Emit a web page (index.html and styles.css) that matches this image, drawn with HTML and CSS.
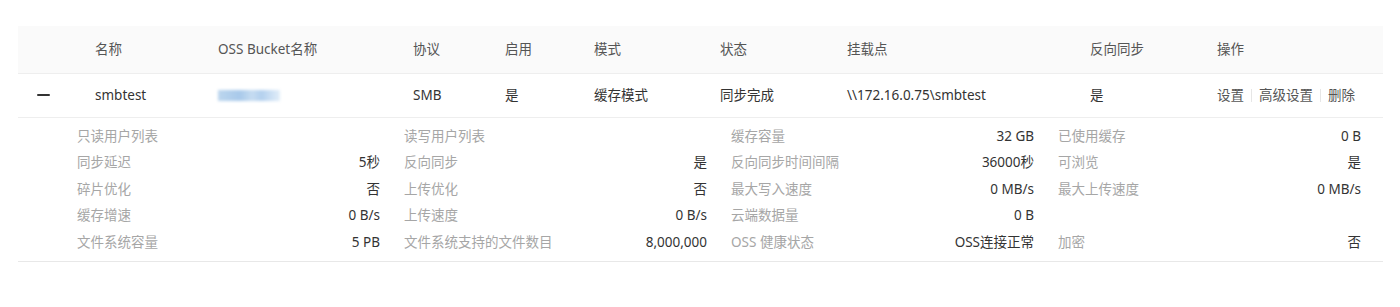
FILE: index.html
```html
<!DOCTYPE html>
<html lang="zh-CN">
<head>
<meta charset="utf-8">
<title>共享列表</title>
<link rel="stylesheet" href="styles.css">
</head>
<body>
<div class="wrap">
  <table class="tbl">
    <colgroup>
      <col class="c-exp"><col class="c-name"><col class="c-bucket"><col class="c-proto"><col class="c-en"><col class="c-mode"><col class="c-status"><col class="c-mount"><col class="c-rev"><col class="c-ops">
    </colgroup>
    <thead>
      <tr>
        <th></th><th>名称</th><th>OSS Bucket名称</th><th>协议</th><th>启用</th><th>模式</th><th>状态</th><th>挂载点</th><th>反向同步</th><th>操作</th>
      </tr>
    </thead>
    <tbody>
      <tr class="main">
        <td><span class="minus"></span></td>
        <td>smbtest</td>
        <td><span class="blur"></span></td>
        <td>SMB</td>
        <td>是</td>
        <td>缓存模式</td>
        <td>同步完成</td>
        <td>\\172.16.0.75\smbtest</td>
        <td>是</td>
        <td class="ops"><a>设置</a><span class="sep"></span><a>高级设置</a><span class="sep"></span><a>删除</a></td>
      </tr>
      <tr class="detail-row">
        <td colspan="10">
          <div class="detail">
            <div class="kv"><span class="k">只读用户列表</span><span class="v"></span></div>
            <div class="kv"><span class="k">读写用户列表</span><span class="v"></span></div>
            <div class="kv"><span class="k">缓存容量</span><span class="v">32 GB</span></div>
            <div class="kv"><span class="k">已使用缓存</span><span class="v">0 B</span></div>

            <div class="kv"><span class="k">同步延迟</span><span class="v">5秒</span></div>
            <div class="kv"><span class="k">反向同步</span><span class="v">是</span></div>
            <div class="kv"><span class="k">反向同步时间间隔</span><span class="v">36000秒</span></div>
            <div class="kv"><span class="k">可浏览</span><span class="v">是</span></div>

            <div class="kv"><span class="k">碎片优化</span><span class="v">否</span></div>
            <div class="kv"><span class="k">上传优化</span><span class="v">否</span></div>
            <div class="kv"><span class="k">最大写入速度</span><span class="v">0 MB/s</span></div>
            <div class="kv"><span class="k">最大上传速度</span><span class="v">0 MB/s</span></div>

            <div class="kv"><span class="k">缓存增速</span><span class="v">0 B/s</span></div>
            <div class="kv"><span class="k">上传速度</span><span class="v">0 B/s</span></div>
            <div class="kv"><span class="k">云端数据量</span><span class="v">0 B</span></div>
            <div class="kv"><span class="k"></span><span class="v"></span></div>

            <div class="kv"><span class="k">文件系统容量</span><span class="v">5 PB</span></div>
            <div class="kv"><span class="k">文件系统支持的文件数目</span><span class="v">8,000,000</span></div>
            <div class="kv"><span class="k">OSS 健康状态</span><span class="v">OSS连接正常</span></div>
            <div class="kv"><span class="k">加密</span><span class="v">否</span></div>
          </div>
        </td>
      </tr>
    </tbody>
  </table>
</div>
</body>
</html>
```

FILE: styles.css
```css
* { box-sizing: border-box; }
html, body { margin: 0; padding: 0; background: #fff; }
body {
  font-family: "Noto Sans", "Noto Sans CJK SC", sans-serif;
  font-size: 13.5px;
  color: #333;
}
.wrap { padding: 26px 17px 0 18px; }
.tbl {
  width: 1365px;
  border-collapse: collapse;
  table-layout: fixed;
}
.c-exp { width: 67px; }
.c-name { width: 123px; }
.c-bucket { width: 195px; }
.c-proto { width: 92px; }
.c-en { width: 89px; }
.c-mode { width: 126px; }
.c-status { width: 127px; }
.c-mount { width: 243px; }
.c-rev { width: 127px; }
.c-ops { width: 176px; }

.tbl th {
  background: #fafafa;
  height: 47px;
  padding: 0 0 0 10px;
  text-align: left;
  font-weight: normal;
  color: #555;
  border-bottom: 1px solid #eeeeee;
  line-height: 20px;
}
.tbl tr.main td {
  height: 44px;
  padding: 0 0 0 10px;
  border-bottom: 1px solid #eeeeee;
  line-height: 20px;
  color: #333;
  white-space: nowrap;
}
.tbl tr.main td:first-child { padding-left: 19px; }
.minus {
  display: block;
  width: 13px;
  height: 2px;
  background: #333;
  border-radius: 1px;
}
.blur {
  display: inline-block;
  vertical-align: middle;
  width: 62px;
  height: 11px;
  background: linear-gradient(90deg, #bcd6ee 0%, #a8c9ea 35%, #c6dcf1 55%, #b3d0ee 70%, #e2eef9 100%);
  filter: blur(1.5px);
  margin-top: -2px;
}
.ops a { color: #555; cursor: pointer; }
.ops .sep {
  display: inline-block;
  width: 1px;
  height: 13px;
  background: #e6e6e6;
  vertical-align: -2px;
  margin: 0 7px;
}
.detail-row td {
  padding: 0;
  border-bottom: 1px solid #e8e8e8;
}
.detail {
  display: grid;
  grid-template-columns: repeat(4, 303px);
  grid-auto-rows: 26.5px;
  column-gap: 24px;
  padding: 5px 0 6px 59px;
}
.kv {
  display: flex;
  justify-content: space-between;
  align-items: center;
  line-height: 20px;
  white-space: nowrap;
}
.k { color: #a6a6a6; }
.v { color: #333; }
```
